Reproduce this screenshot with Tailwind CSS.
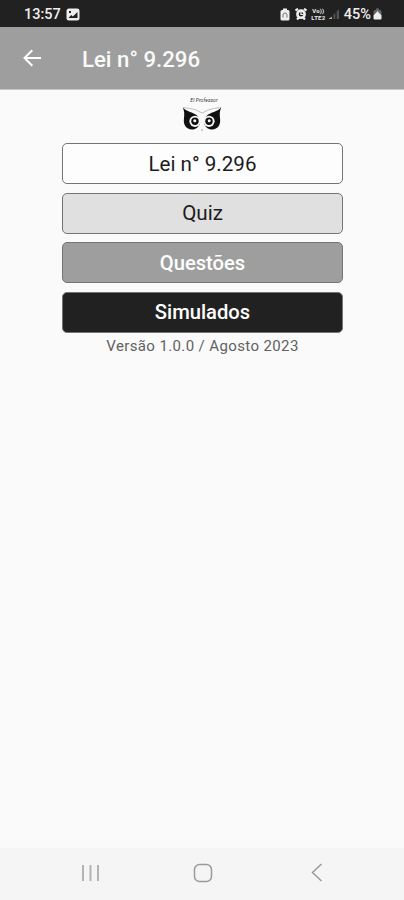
<!DOCTYPE html>
<html lang="pt-BR">
<head>
    <meta charset="UTF-8">
    <meta name="viewport" content="width=device-width, initial-scale=1.0">
    <title>Lei n° 9.296</title>
    <script src="https://cdn.jsdelivr.net/npm/@tailwindcss/browser@4"></script>
</head>
<body class="bg-[#fafafa] font-[Roboto,sans-serif]">
    <div class="flex h-screen flex-col overflow-hidden">
        <!-- Status bar -->
        <div class="flex h-[27px] shrink-0 items-center bg-[#212121] pl-6 pr-[22px] pt-px text-[#eeeeee]">
            <span class="pt-0.5 text-[14.5px] font-medium leading-none">13:57</span>
            <svg class="ml-[5px]" width="14" height="13" viewBox="0 0 14 13">
                <rect x="0.5" y="0.5" width="13" height="12" rx="2.5" fill="#eeeeee"/>
                <path d="M2.5 10 5.2 7l1.6 1.6L11.5 4v6z" fill="#212121"/>
                <path d="M3 3h2v2H3z" fill="#212121"/>
            </svg>
            <div class="ml-auto flex items-center">
                <svg width="10" height="13" viewBox="0 0 10 13">
                    <path d="M3 .5h4V2h1a1.5 1.5 0 0 1 1.5 1.5V11A1.5 1.5 0 0 1 8 12.5H2A1.5 1.5 0 0 1 .5 11V3.5A1.5 1.5 0 0 1 2 2h1z" fill="#eeeeee"/>
                    <path d="M3 9.500V7a2 2 0 0 1 4 0v2.500" fill="none" stroke="#777777" stroke-width="1"/>
                </svg>
                <svg class="ml-[5px]" width="12" height="12" viewBox="0 0 12 12">
                    <path d="M.5 2.500 3 .8M11.500 2.500 9 .8M2 11.500l2-2M10 11.500l-2-2" stroke="#eeeeee" stroke-width="2.200"/>
                    <circle cx="6" cy="6.200" r="3.600" fill="#212121" stroke="#eeeeee" stroke-width="2.600"/>
                    <path d="M6 4v2.500h2" fill="none" stroke="#eeeeee" stroke-width="1.200"/>
                </svg>
                <div class="ml-[3px] flex w-[17px] flex-col items-center text-[6px] font-bold leading-[7px] tracking-[.2px]">
                    <span>Vo))</span>
                    <span>LTE2</span>
                </div>
                <svg class="ml-px" width="12" height="12" viewBox="0 0 12 12">
                    <path d="M1 11h3V8.500L1 10.500z" fill="#aaaaaa"/>
                    <path d="M5.500 11h1.800V5L5.500 6.500zM8.700 11h2.300V1.500L8.700 3.500z" fill="#555555"/>
                </svg>
                <span class="ml-1 pt-0.5 text-[14.5px] font-medium leading-none">45%</span>
                <svg class="ml-[2px]" width="9" height="12" viewBox="0 0 9 12">
                    <path d="M3 .5h3V2h1.500L8.500 4v2h-8V4L1.500 2H3z" fill="#666666"/>
                    <path d="M.5 7 3 5l1.500-2L6 5l2.500 2v3.500a1 1 0 0 1-1 1h-6a1 1 0 0 1-1-1z" fill="#eeeeee"/>
                </svg>
            </div>
        </div>

        <!-- App bar -->
        <header class="flex h-[63px] shrink-0 items-center border-b border-[#c8c8c8] bg-[#9e9e9e] pl-[23px] text-white">
            <svg width="19" height="18" viewBox="0 0 19 18" fill="none" stroke="currentColor" stroke-width="2">
                <path d="M18 9H2M9.300 1.200 1.500 9l7.800 7.800"/>
            </svg>
            <h1 class="ml-10 pt-0.5 text-[22.2px] font-medium leading-none text-[#fafafa]">Lei n° 9.296</h1>
        </header>

        <!-- Menu -->
        <main class="flex flex-1 flex-col items-center pt-2">
            <div class="flex h-[45px] w-11 flex-col items-center">
                <span class="ml-1 whitespace-nowrap text-[5px] italic leading-[5px] tracking-[.1px] text-[#333333]">El Professor</span>
                <svg width="40" height="30" viewBox="0 0 40 30">
                    <path d="M.8 4.500C5 9 11 9 15 12.500c3 2.500 3.500 5 3 7.500-1 4-4 6.500-8 6.500C4 26 1 22 2 15c.5-4 .3-7-1.200-10.500z" fill="#111111"/>
                    <path d="M39.200 4.500C35 9 29 9 25 12.500c-3 2.500-3.500 5-3 7.500 1 4 4 6.500 8 6.500 6-.5 9-4.500 8-11.500-.5-4-.3-7 1.200-10.500z" fill="#111111"/>
                    <path d="M1 4.500c4 .5 9 1 13 2.500l6 3 6-3c4-1.500 9-2 13-2.500" fill="none" stroke="#b0b0b0" stroke-width=".8"/>
                    <circle cx="13" cy="18.300" r="5.600" fill="#fafafa"/>
                    <circle cx="27" cy="18.300" r="5.600" fill="#fafafa"/>
                    <circle cx="13" cy="18.300" r="3.700" fill="#111111"/>
                    <circle cx="27" cy="18.300" r="3.700" fill="#111111"/>
                    <circle cx="12.800" cy="17.800" r="1.500" fill="#fafafa"/>
                    <circle cx="27.200" cy="17.800" r="1.500" fill="#fafafa"/>
                    <path d="M19.200 26h1.600l-.8 3z" fill="#aaaaaa"/>
                </svg>
            </div>
            <div class="flex w-[281px] flex-col gap-[8.500px] text-[20.2px] text-[#1c1c1c]">
                <button class="h-[41px] rounded-[5px] border border-[#757575] bg-[#fdfdfd] pl-px pt-0.5 text-[20.600px]">Lei n° 9.296</button>
                <button class="h-[41px] rounded-[5px] border border-[#757575] bg-[#e0e0e0] pl-px pt-px text-[20.600px]">Quiz</button>
                <button class="h-[41px] rounded-[5px] border border-[#757575] bg-[#9e9e9e] pl-px pt-0.5 font-medium text-white">Questões</button>
                <button class="h-[41px] rounded-[5px] border border-[#757575] bg-[#212121] pl-px pt-px font-medium text-white">Simulados</button>
            </div>
            <p class="mt-[3px] pl-px text-[15px] leading-5 tracking-[.38px] text-[#616161]">Versão 1.0.0 / Agosto 2023</p>
        </main>

        <!-- Navigation bar -->
        <nav class="flex h-[52px] shrink-0 items-center bg-[#f5f5f5] pb-[3px] pl-[81px]">
            <svg width="19" height="18" viewBox="0 0 19 18" stroke="#b4b4b4" stroke-width="2">
                <path d="M2 1v16M9.500 1v16M17 1v16"/>
            </svg>
            <svg class="ml-[93px]" width="20" height="20" viewBox="0 0 20 20" fill="none" stroke="#9a9a9a" stroke-width="1.500">
                <rect x="1.500" y="1.500" width="17" height="17" rx="5"/>
            </svg>
            <svg class="ml-[98px]" width="12" height="19" viewBox="0 0 12 19" fill="none" stroke="#9a9a9a" stroke-width="1.500">
                <path d="M10.500 1 1.500 9.500l9 8.500"/>
            </svg>
        </nav>
    </div>
</body>
</html>
